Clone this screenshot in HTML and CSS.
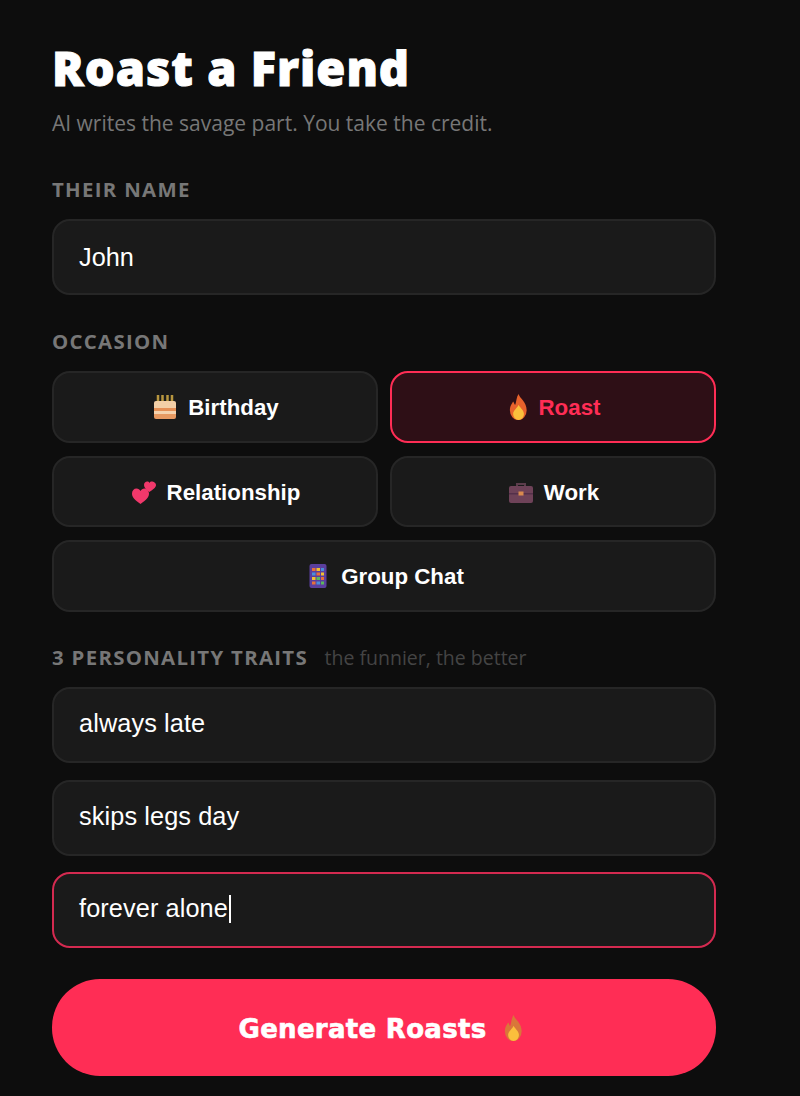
FILE: index.html
```html
<!DOCTYPE html>
<html lang="en">
<head>
    <meta charset="UTF-8">
    <title>Roast a Friend</title>
    <link rel="stylesheet" href="styles.css">
</head>
<body>
    <main class="page">
        <h1 class="title">Roast a Friend</h1>
        <p class="subtitle">AI writes the savage part. You take the credit.</p>

        <div class="label label-name">THEIR NAME</div>
        <div class="field">John</div>

        <div class="label label-occasion">OCCASION</div>
        <div class="occasions">
            <button class="chip">
                <svg class="emoji" viewBox="0 0 24 24"><path d="M5 0v7M9.500 0v7M14.500 0v7M19 0v7" stroke="#b8963f" stroke-width="2.500"/><path d="M1 8q0-2 2-2h18q2 0 2 2v5H1z" fill="#f3cfa6"/><rect x="1" y="13" width="22" height="3" fill="#e58f55"/><rect x="1" y="16" width="22" height="3" fill="#f6d3ae"/><path d="M1 19h22v3q0 2-2 2H3q-2 0-2-2z" fill="#e89a62"/></svg>
                Birthday
            </button>
            <button class="chip chip-active">
                <svg class="flame" viewBox="3 0 17 24"><path d="M12 0c1 4 7.500 7 7.500 15a7.700 9 0 0 1-15.500 0c0-4 2-6 3-8 1 1 1 3 2 3 1-3 1-7 3-10z" fill="#e8622c"/><path d="M12 10c1 2.500 5 5 5 8.500a5 5.500 0 0 1-10 0c0-3.500 4-5.500 5-8.500z" fill="#fbbf3c"/></svg>
                Roast
            </button>
            <button class="chip">
                <svg class="emoji" viewBox="0 0 24 24"><path d="M8.500 24C3 20 0 17.500 0 13.500 0 10.500 2 8.500 4.500 8.500c1.800 0 3.200.9 4 2.500.8-1.600 2.200-2.500 4-2.500C15 8.500 17 10.500 17 13.500c0 4-3 6.500-8.500 10.500z" fill="#f0386b"/><path d="M17.500 12C14 9.500 12 7.500 12 5c0-2 1.500-3.500 3.200-3.500 1 0 1.800.5 2.300 1.400.5-.9 1.300-1.400 2.300-1.400C21.500 1.500 24 3 24 5c0 2.500-3 4.500-6.500 7z" fill="#f0386b"/></svg>
                Relationship
            </button>
            <button class="chip">
                <svg class="emoji" viewBox="0 0 24 24"><path d="M8 7V4h8v3" fill="none" stroke="#5c3d4c" stroke-width="2"/><rect x="0" y="6" width="24" height="17" rx="2" fill="#6e4258"/><rect x="0" y="13" width="24" height="1.500" fill="#54304a"/><rect x="9.500" y="11.500" width="5" height="4" fill="#d98a4e"/></svg>
                Work
            </button>
            <button class="chip chip-wide">
                <svg class="emoji" viewBox="0 0 24 24"><rect x="3.500" y="0" width="17" height="24" rx="2" fill="#5b3f9e"/><rect x="6" y="4" width="3.500" height="3" fill="#e8703a"/><rect x="10.500" y="4" width="3.500" height="3" fill="#f2c230"/><rect x="15" y="4" width="3" height="3" fill="#4a90d9"/><rect x="6" y="8.500" width="3.500" height="3" fill="#4a90d9"/><rect x="10.500" y="8.500" width="3.500" height="3" fill="#e8703a"/><rect x="15" y="8.500" width="3" height="3" fill="#f2c230"/><rect x="6" y="13" width="3.500" height="3" fill="#f2c230"/><rect x="10.500" y="13" width="3.500" height="3" fill="#5cb85c"/><rect x="15" y="13" width="3" height="3" fill="#e8703a"/><rect x="6" y="17.500" width="3.500" height="3" fill="#e8703a"/><rect x="10.500" y="17.500" width="3.500" height="3" fill="#4a90d9"/><rect x="15" y="17.500" width="3" height="3" fill="#5cb85c"/></svg>
                Group Chat
            </button>
        </div>

        <div class="label label-traits">3 PERSONALITY TRAITS <span class="hint">the funnier, the better</span></div>
        <div class="traits">
            <div class="field">always late</div>
            <div class="field">skips legs day</div>
            <div class="field field-focus">forever alone<span class="caret"></span></div>
        </div>

        <button class="generate">
            Generate Roasts
            <svg class="flame" viewBox="3 0 17 24"><path d="M12 0c1 4 7.500 7 7.500 15a7.700 9 0 0 1-15.500 0c0-4 2-6 3-8 1 1 1 3 2 3 1-3 1-7 3-10z" fill="#d9763a"/><path d="M12 10c1 2.500 5 5 5 8.500a5 5.500 0 0 1-10 0c0-3.500 4-5.500 5-8.500z" fill="#fbbf3c"/></svg>
        </button>
    </main>
</body>
</html>
```

FILE: styles.css
```css
body { background: #0d0d0d; margin: 0; color: #fff; font-family: "Liberation Sans", sans-serif; }

.page { width: 664px; padding: 38px 84px 0 52px; }

.title { margin: 0; font-family: "Noto Sans", sans-serif; font-size: 47px; font-weight: 900; line-height: 60px; letter-spacing: 1px; -webkit-text-stroke: 1px #fff; color: #fff; }
.subtitle { margin: 12px 0 0; font-family: "Open Sans", sans-serif; font-size: 21px; line-height: 27px; color: #777; }

.label { font-family: "Open Sans", sans-serif; font-size: 20.400px; font-weight: 700; line-height: 27px; letter-spacing: 1.300px; color: #777; }
.label-name { margin-top: 39px; margin-bottom: 16px; }
.label-occasion { margin-top: 33px; margin-bottom: 16px; }
.label-traits { margin-top: 32px; margin-bottom: 16px; }
.hint { margin-left: 10px; font-size: 19.500px; font-weight: 400; letter-spacing: 0; color: #444; }

.field { box-sizing: border-box; height: 76px; padding: 0 25px; display: flex; align-items: center; background: #1a1a1a; border: 2px solid #262626; border-radius: 18px; font-size: 25.300px; color: #fff; }
.field-focus { border-color: #d42a50; }
.caret { width: 2px; height: 28px; margin-left: 1px; background: #fff; }

.occasions { display: grid; grid-template-columns: 1fr 1fr; gap: 13px 12px; }
.chip { height: 71.700px; padding: 2px 0 0 2px; display: flex; align-items: center; justify-content: center; gap: 11px; background: #1a1a1a; border: 2px solid #262626; border-radius: 18px; font-family: "Liberation Sans", sans-serif; font-size: 22.300px; font-weight: 700; color: #fff; }
.chip-active { background: #2e0f16; border-color: #ff2d55; color: #ff2d55; }
.chip-wide { grid-column: span 2; }

.emoji { width: 24px; height: 24px; flex: none; margin-top: -2px; }
.flame { width: 20px; height: 26px; flex: none; margin-top: -2px; }

.traits { display: flex; flex-direction: column; gap: 16.500px; }
.traits .field { padding-bottom: 3px; letter-spacing: 0.100px; }

.generate { box-sizing: border-box; width: 100%; height: 97px; margin-top: 31px; padding: 2px 0 0; display: flex; align-items: center; justify-content: center; gap: 17px; background: #ff2d55; border: 0; border-radius: 48px; font-family: "DejaVu Sans", sans-serif; font-size: 26px; font-weight: 700; letter-spacing: 0.300px; -webkit-text-stroke: 0.600px #fff; color: #fff; }
.generate .flame { margin-right: 6px; }
```
